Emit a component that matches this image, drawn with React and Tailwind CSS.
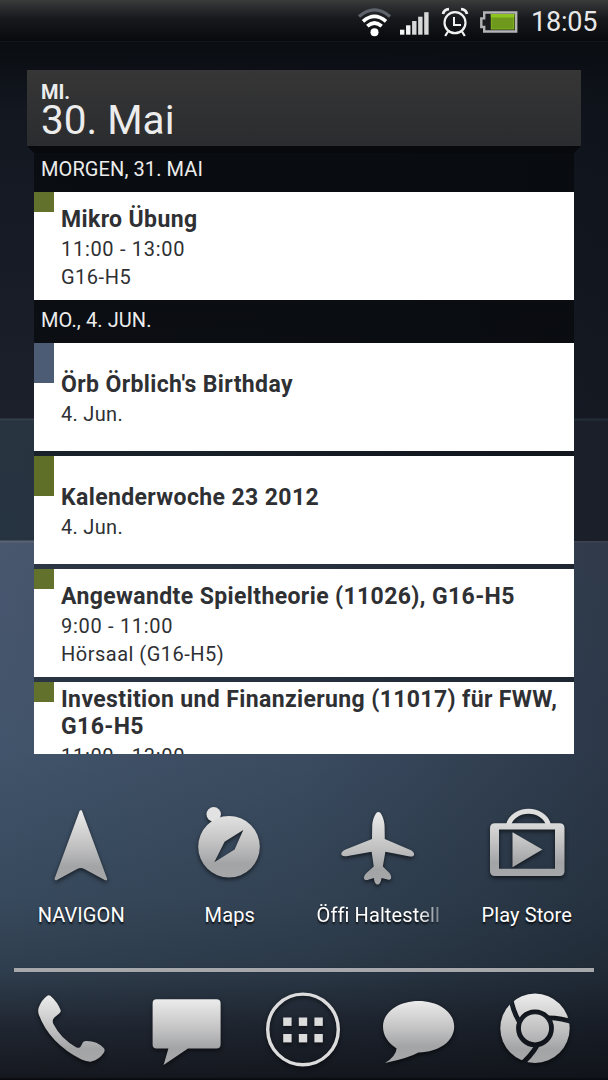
import React from "react";

const sections = [
  {
    title: "MORGEN, 31. MAI",
    headerClass: "h-[45.5px]",
    events: [
      { id: 1, title: "Mikro Übung", time: "11:00 - 13:00", place: "G16-H5", color: "bg-[#62722c]" },
    ],
  },
  {
    title: "MO., 4. JUN.",
    headerClass: "h-[43px] pb-[3px]",
    events: [
      { id: 2, title: "Örb Örblich's Birthday", day: "4. Jun.", color: "bg-[#4c5c74]" },
      { id: 3, title: "Kalenderwoche 23 2012", day: "4. Jun.", color: "bg-[#5f6f28]" },
      {
        id: 4,
        title: "Angewandte Spieltheorie (11026), G16-H5",
        time: "9:00 - 11:00",
        place: "Hörsaal (G16-H5)",
        color: "bg-[#62722c]",
      },
      {
        id: 5,
        title: "Investition und Finanzierung (11017) für FWW, G16-H5",
        time: "11:00 - 13:00",
        color: "bg-[#62722c]",
        long: true,
      },
    ],
  },
];

const Metal = ({ id, y1, y2 }) => (
  <linearGradient id={id} gradientUnits="userSpaceOnUse" x1="0" x2="0" y1={y1} y2={y2}>
    <stop offset="0" stopColor="#ececec" />
    <stop offset="0.5" stopColor="#c2c2c3" />
    <stop offset="0.8" stopColor="#a3a4a6" />
    <stop offset="1" stopColor="#a6a7a9" />
  </linearGradient>
);

const iconClass = "h-20 overflow-visible drop-shadow-[0_2px_2px_rgba(0,0,0,0.6)]";

const NavigonIcon = () => (
  <svg viewBox="0 0 96 80" className={`${iconClass} w-24`}>
    <defs><Metal id="nav" y1={5} y2={76} /></defs>
    <path
      d="M47.8 6.5 L72.8 74 L51.5 62.6 Q47.8 60.6 44 62.6 L22.8 74 Z"
      fill="url(#nav)" stroke="url(#nav)" strokeWidth="2.6" strokeLinejoin="round"
    />
  </svg>
);

const MapsIcon = () => (
  <svg viewBox="0 0 96 80" className={`${iconClass} w-24`}>
    <defs><Metal id="maps" y1={2} y2={73} /></defs>
    <circle cx="31.7" cy="9.3" r="7.2" fill="#e2e2e2" />
    <path
      fillRule="evenodd"
      d="M16.2 41.7a30.8 30.8 0 1 0 61.6 0a30.8 30.8 0 1 0 -61.6 0Z M61.3 25 L52.6 44.6 L32.3 57.3 L42.6 36.8 Z"
      fill="url(#maps)"
    />
  </svg>
);

const PlaneIcon = () => (
  <svg viewBox="0 0 96 80" className={`${iconClass} w-24`}>
    <defs><Metal id="plane" y1={6} y2={79} /></defs>
    <path
      d="M48.4 7 C51.5 7 54.6 15 54.6 22 L54.8 34 L81 45.2 C86 48 84.5 52.4 79.8 51.4 L55.4 46.8 L52.8 61.5 L58.4 67 C62.4 70.5 61.8 75.5 58.6 74.8 L51.6 73 Q50.4 79.6 47.6 79.6 Q44.6 79.6 43.8 73 L37.4 75 C32.4 75.6 33 70.5 37.6 67 L43.8 61.5 L41.6 46.8 L16.4 51.2 C10 52 9.5 47.4 15.6 44.6 L42 34 L42.2 22 C42.2 15 45.3 7 48.4 7 Z"
      fill="url(#plane)"
    />
  </svg>
);

const PlayStoreIcon = () => (
  <svg viewBox="0 0 96 80" className={`${iconClass} w-24`}>
    <defs><Metal id="play" y1={4} y2={71} /></defs>
    <path d="M29.5 20 C34 1.8 65 1.8 69.5 20" fill="none" stroke="#dedede" strokeWidth="5" />
    <path
      fillRule="evenodd"
      d="M16 18.2 H80.5 Q85.5 18.2 85.5 23.2 V66 Q85.5 71 80.5 71 H16 Q11 71 11 66 V23.2 Q11 18.2 16 18.2 Z M20 24.6 V63.8 H76 V24.6 Z"
      fill="url(#play)"
    />
    <path d="M33.5 27.2 L63.4 44.6 L33.5 62.2 Z" fill="url(#play)" />
  </svg>
);

const PhoneIcon = () => (
  <svg viewBox="0 0 80 80" className={`${iconClass} w-20`}>
    <defs><Metal id="phone" y1={5} y2={72} /></defs>
    <path
      d="M16 6 Q17.8 4.6 19.6 6 Q26.5 12 29.7 20.2 Q30 22 28.5 23.2 L23.4 27.4 Q20.6 30 22.4 34 Q30 49 45.5 57.4 Q48.6 58.8 50 56 L51.8 52.6 Q52.6 51 54.6 51 Q66 50.6 73 58.2 Q74.2 60.2 73 62.4 Q68.4 69.4 60.4 71.6 Q56 72 50.5 69.6 Q18 53 7.6 24 Q6.6 20 8 16.8 Q10.8 9.8 16 6 Z"
      fill="url(#phone)"
    />
  </svg>
);

const MessageIcon = () => (
  <svg viewBox="0 0 80 80" className={`${iconClass} w-20`}>
    <defs><Metal id="msg" y1={9} y2={70} /></defs>
    <path
      d="M9.5 9.2 H69.5 Q73.6 9.2 73.6 13.4 V54.6 Q73.6 58.6 69.5 58.6 H41 L16.6 75 L21.4 58.6 H9.5 Q5.6 58.6 5.6 54.6 V13.4 Q5.6 9.2 9.5 9.2 Z"
      fill="url(#msg)"
    />
  </svg>
);

const DrawerIcon = () => (
  <svg viewBox="0 0 80 80" className={`${iconClass} w-20`}>
    <circle cx="40" cy="39.4" r="35.3" fill="none" stroke="#dcdcdd" strokeWidth="3.4" />
    {[27.5, 44].map((y) =>
      [20.2, 35.8, 51.4].map((x) => (
        <rect key={`${x}-${y}`} x={x} y={y} width="8.4" height="8.4" fill="#dcdcdd" />
      ))
    )}
  </svg>
);

const BubbleIcon = () => (
  <svg viewBox="0 0 80 80" className={`${iconClass} w-20`}>
    <defs><Metal id="bubble" y1={10} y2={68} /></defs>
    <path
      d="M39.6 11 C59.5 11 75.2 22 75.2 36.6 C75.2 51.5 59.5 62.6 39.4 62.4 Q30.5 67.6 6 73 Q17 66 17.6 58.4 C9 53.4 4 45.5 4 36.6 C4 22 19.8 11 39.6 11 Z"
      fill="url(#bubble)"
    />
  </svg>
);

const ChromeIcon = () => (
  <svg viewBox="0 0 80 80" className={`${iconClass} w-20`}>
    <defs>
      <Metal id="chrome" y1={4} y2={73} />
      <mask id="chromeCut" maskUnits="userSpaceOnUse" x="0" y="0" width="80" height="80">
        <rect width="80" height="80" fill="white" />
        <g transform="translate(40 38.3)" fill="none" stroke="black">
          <circle r="16.5" strokeWidth="4.8" />
          {[0, 120, 240].map((a) => (
            <path key={a} d="M-24.5 -32 Q-22.5 -18 -15.5 -6" strokeWidth="4.8" transform={`rotate(${a})`} />
          ))}
        </g>
      </mask>
    </defs>
    <circle cx="40" cy="38.3" r="34.7" fill="url(#chrome)" mask="url(#chromeCut)" />
  </svg>
);

const StatusBar = () => (
  <div className="h-[42px] flex justify-end items-center pr-[10px] border-b border-[#12161b] bg-linear-to-b from-[#3b3b3b] via-[#17191d] via-45% to-[#080a0d]">
    <svg viewBox="0 0 34 42" className="w-[34px] h-[42px]" fill="none">
      <path d="M1 16.5 Q16.5 3.4 32 16.5" stroke="#5e636b" strokeWidth="3.2" />
      <path d="M5 21.4 Q16.5 11.4 28 21.4" stroke="#fff" strokeWidth="3.6" />
      <path d="M9.3 26.2 Q16.5 19.8 23.7 26.2" stroke="#fff" strokeWidth="3.6" />
      <circle cx="16.5" cy="32.3" r="4" fill="#fff" />
    </svg>
    <svg viewBox="0 0 29 42" className="w-[29px] h-[42px] ml-2">
      {[29.7, 25.3, 21, 16.7, 12.2].map((y, idx) => (
        <rect key={idx} x={idx * 6.05} y={y} width="4.4" height={34.7 - y} fill={idx < 2 ? "#f4f4f4" : "#d8d8d8"} />
      ))}
    </svg>
    <svg viewBox="0 0 28 42" className="w-7 h-[42px] ml-[12px]" fill="none" stroke="#f2f2f2" strokeWidth="2.2">
      <circle cx="14" cy="22.7" r="10.5" />
      <path d="M13 17 V25 H20" strokeWidth="2" />
      <path d="M2 14 Q3 9.5 8 9.2 M26 14 Q25 9.5 20 9.2" strokeWidth="2.8" />
      <path d="M7 31.5 L4.2 36 M21 31.5 L23.8 36" />
    </svg>
    <svg viewBox="0 0 38 42" className="w-[38px] h-[42px] ml-[11px]">
      <path
        d="M4.2 12.5 H36.2 V31.5 H4.2 V27 H1.3 V18.4 H4.2 Z"
        fill="#1c1d20" stroke="#b4b4b6" strokeWidth="2.4"
      />
      <rect x="10.8" y="14" width="23.6" height="15.6" fill="#7fae1f" />
      <rect x="12" y="18" width="21" height="10.5" fill="#6f991c" />
      <rect x="10.8" y="14" width="23.6" height="3" fill="#8dc41f" />
    </svg>
    <span className="ml-[13px] pt-[4px] w-[67px] text-[27px] leading-none tracking-[-0.2px] text-[#e8e8e8]">18:05</span>
  </div>
);

const EventCard = ({ event }) => (
  <div className="h-[108px] shrink-0 flex bg-white text-[#2e3033]">
    <div className={`w-5 shrink-0 ${event.day ? "h-10" : "h-5"} ${event.color}`} />
    <div className={`flex-1 pl-[7px] flex flex-col ${event.long ? "pt-[4.5px]" : "justify-center pt-[5px]"}`}>
      <p className="text-[23px] leading-[27px] font-bold tracking-[0.38px]">{event.title}</p>
      <div className="pt-[2px] text-[20px] leading-[28px]">
        {event.day && <p className="tracking-[0.3px]">{event.day}</p>}
        {event.time && <p className="tracking-[0.7px]">{event.time}</p>}
        {event.place && <p className="tracking-[0.5px]">{event.place}</p>}
      </div>
    </div>
  </div>
);

const AgendaWidget = () => (
  <div className="mt-7 mx-[27px]">
    <div className="h-[76px] pl-[14px] pt-[12px] bg-linear-to-b from-[#363636] to-[#2b2c2f] text-[#ececec]">
      <p className="text-[20px] leading-5 font-bold">MI.</p>
      <p className="text-[40.5px] leading-[37px]">30. Mai</p>
    </div>
    {/* folded edge under the date header */}
    <div className="h-[7px] -mb-[7px] bg-[#07090c] [clip-path:polygon(0_0,100%_0,calc(100%-7px)_100%,7px_100%)]" />
    <div className="mx-[7px] w-[540px] h-[607.5px] overflow-hidden flex flex-col bg-[#05080a]/40">
      {sections.map((section) => (
        <div key={section.title} className="shrink-0">
          <div className={`flex items-center pl-[7px] bg-[#05080a]/50 text-[20px] text-[#ececec] ${section.headerClass}`}>
            <span className="tracking-[0.1px]">{section.title}</span>
          </div>
          <div className="flex flex-col gap-[5px]">
            {section.events.map((event) => (
              <EventCard key={event.id} event={event} />
            ))}
          </div>
        </div>
      ))}
    </div>
  </div>
);

const apps = [
  { name: "NAVIGON", icon: <NavigonIcon /> },
  { name: "Maps", icon: <MapsIcon /> },
  { name: "Öffi Haltestell", icon: <PlaneIcon />, faded: true },
  { name: "Play Store", icon: <PlayStoreIcon /> },
];

const App = () => {
  return (
    <div className="w-[608px] h-[1080px] overflow-hidden font-['Roboto',sans-serif] bg-[linear-gradient(90deg,transparent_30%,#1b1f2a_98%),linear-gradient(90deg,transparent_0%,rgba(10,14,20,0.12)_50%,rgba(10,14,20,0.4)_100%),linear-gradient(180deg,#0a0d11_42px,#121720_110px,#1c202b_418px,#36434f_419px,#283541_421px,#263340_540px,#5b6474_541px,#5b6474_542px,#48566e_543px,#42546b_750px,#37495c_900px,#2f3e4e_970px,#1f2530_1030px,#15181f_1077px,#05070a_1080px)] bg-[length:608px_120px,auto,auto] bg-[position:0_421px,0_0,0_0] bg-no-repeat">
      <StatusBar />
      <AgendaWidget />

      <div className="mt-[51.5px] px-[7px] grid grid-cols-4">
        {apps.map((app) => (
          <div key={app.name} className="flex flex-col items-center">
            {app.icon}
            <span
              className={`mt-[16px] text-[20px] leading-7 tracking-[0.1px] whitespace-nowrap text-white text-shadow-[0_2px_2px_rgba(0,0,0,0.8)] ${
                app.faded ? "[mask-image:linear-gradient(90deg,black_82%,transparent_110%)]" : ""
              }`}
            >
              {app.name}
            </span>
          </div>
        ))}
      </div>

      <div className="mt-[39px] ml-[14px] w-[580px] h-1 bg-[#a6a8ab] shadow-[0_0_1px_rgba(0,0,0,0.5)]" />

      <div className="mt-[18px] mx-[13px] w-[580px] grid grid-cols-5 justify-items-center">
        <PhoneIcon />
        <MessageIcon />
        <DrawerIcon />
        <BubbleIcon />
        <ChromeIcon />
      </div>
    </div>
  );
};

export default App;
